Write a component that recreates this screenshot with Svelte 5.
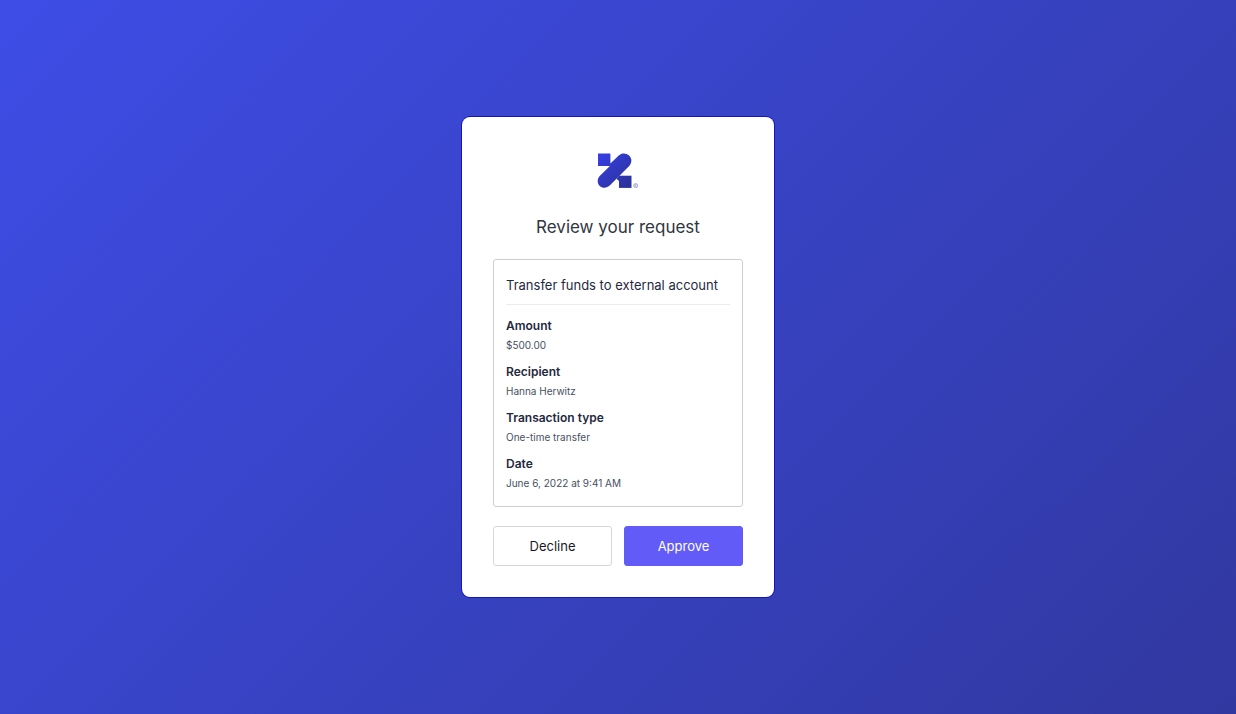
<script>
  const details = [
    { label: 'Amount', value: '$500.00' },
    { label: 'Recipient', value: 'Hanna Herwitz' },
    { label: 'Transaction type', value: 'One-time transfer' },
    { label: 'Date', value: 'June 6, 2022 at 9:41 AM' }
  ];
</script>

<main>
  <section class="card">
    <svg class="logo" viewBox="0 0 42 36" aria-hidden="true">
      <defs>
        <linearGradient id="brand" gradientUnits="userSpaceOnUse" x1="2" y1="0" x2="34" y2="36">
          <stop offset="0" stop-color="#373fe6" />
          <stop offset="1" stop-color="#2a3194" />
        </linearGradient>
      </defs>
      <g fill="url(#brand)">
        <path d="M1 .5h12.400v9.900L21.700 2.600c5.800-5.500 16.200.8 11.500 9.200l-1 1.300L13 32.300C6.500 38.800-3.700 31 2.700 23.100L12.900 12.900H1z" />
        <path d="M22 22.700h12.500v12.200H22z" />
        <path d="M22 23l-2.500 2.800L22 28z" />
      </g>
      <circle cx="38.700" cy="32.600" r="2" fill="none" stroke="#8589d5" stroke-width=".8" />
      <path d="M38.100 33.800v-2.300h.8q.8.600 0 1.200h-.8m.7 0 .6 1" fill="none" stroke="#8589d5" stroke-width=".5" />
    </svg>
    <h1>Review your request</h1>
    <div class="request">
      <h2>Transfer funds to external account</h2>
      <dl>
        {#each details as { label, value }}
          <div>
            <dt>{label}</dt>
            <dd>{value}</dd>
          </div>
        {/each}
      </dl>
    </div>
    <div class="actions">
      <button type="button">Decline</button>
      <button type="button" class="primary">Approve</button>
    </div>
  </section>
</main>

<style>
  :global(body) {
    margin: 0;
  }
  main {
    min-height: 100vh;
    box-sizing: border-box;
    display: grid;
    place-items: center;
    padding: 16px;
    background: linear-gradient(135deg, #3e4de6, #3138a0);
    font-family: Inter, sans-serif;
    color: #1f2940;
  }
  .card {
    width: 100%;
    max-width: 312px;
    box-sizing: border-box;
    padding: 36px 31px 31px;
    border-radius: 8px;
    background: #fff;
    box-shadow: 0 0 0 1px #1515bd;
    display: flex;
    flex-direction: column;
  }
  .logo {
    width: 42px;
    height: 36px;
    align-self: center;
  }
  h1 {
    margin: 24px 0 18px;
    font-size: 17px;
    line-height: 28px;
    font-weight: 400;
    text-align: center;
    color: #30363f;
  }
  .request {
    border: 1px solid #cdcfd6;
    border-radius: 3px;
    padding: 12px 12px 13px;
  }
  h2 {
    margin: 0;
    padding: 2px 0 8px;
    border-bottom: 1px solid #ececf0;
    font-size: 13px;
    line-height: 22px;
    font-weight: 400;
  }
  dl {
    margin: 11px 0 0;
    display: grid;
    gap: 7px;
  }
  dt {
    font-size: 12px;
    line-height: 19px;
    font-weight: 600;
  }
  dd {
    margin: 0;
    font-size: 10px;
    line-height: 20px;
    color: #475063;
  }
  .actions {
    display: grid;
    grid-template-columns: 1fr 1fr;
    gap: 12px;
    margin-top: 19px;
  }
  button {
    height: 40px;
    padding: 0;
    border: 1px solid #d5d7dd;
    border-radius: 3px;
    background: #fff;
    color: #17191f;
    font: 400 13px/20px Inter, sans-serif;
    cursor: pointer;
  }
  .primary {
    border-color: #635bf7;
    background: #635bf7;
    color: #fff;
  }
</style>
